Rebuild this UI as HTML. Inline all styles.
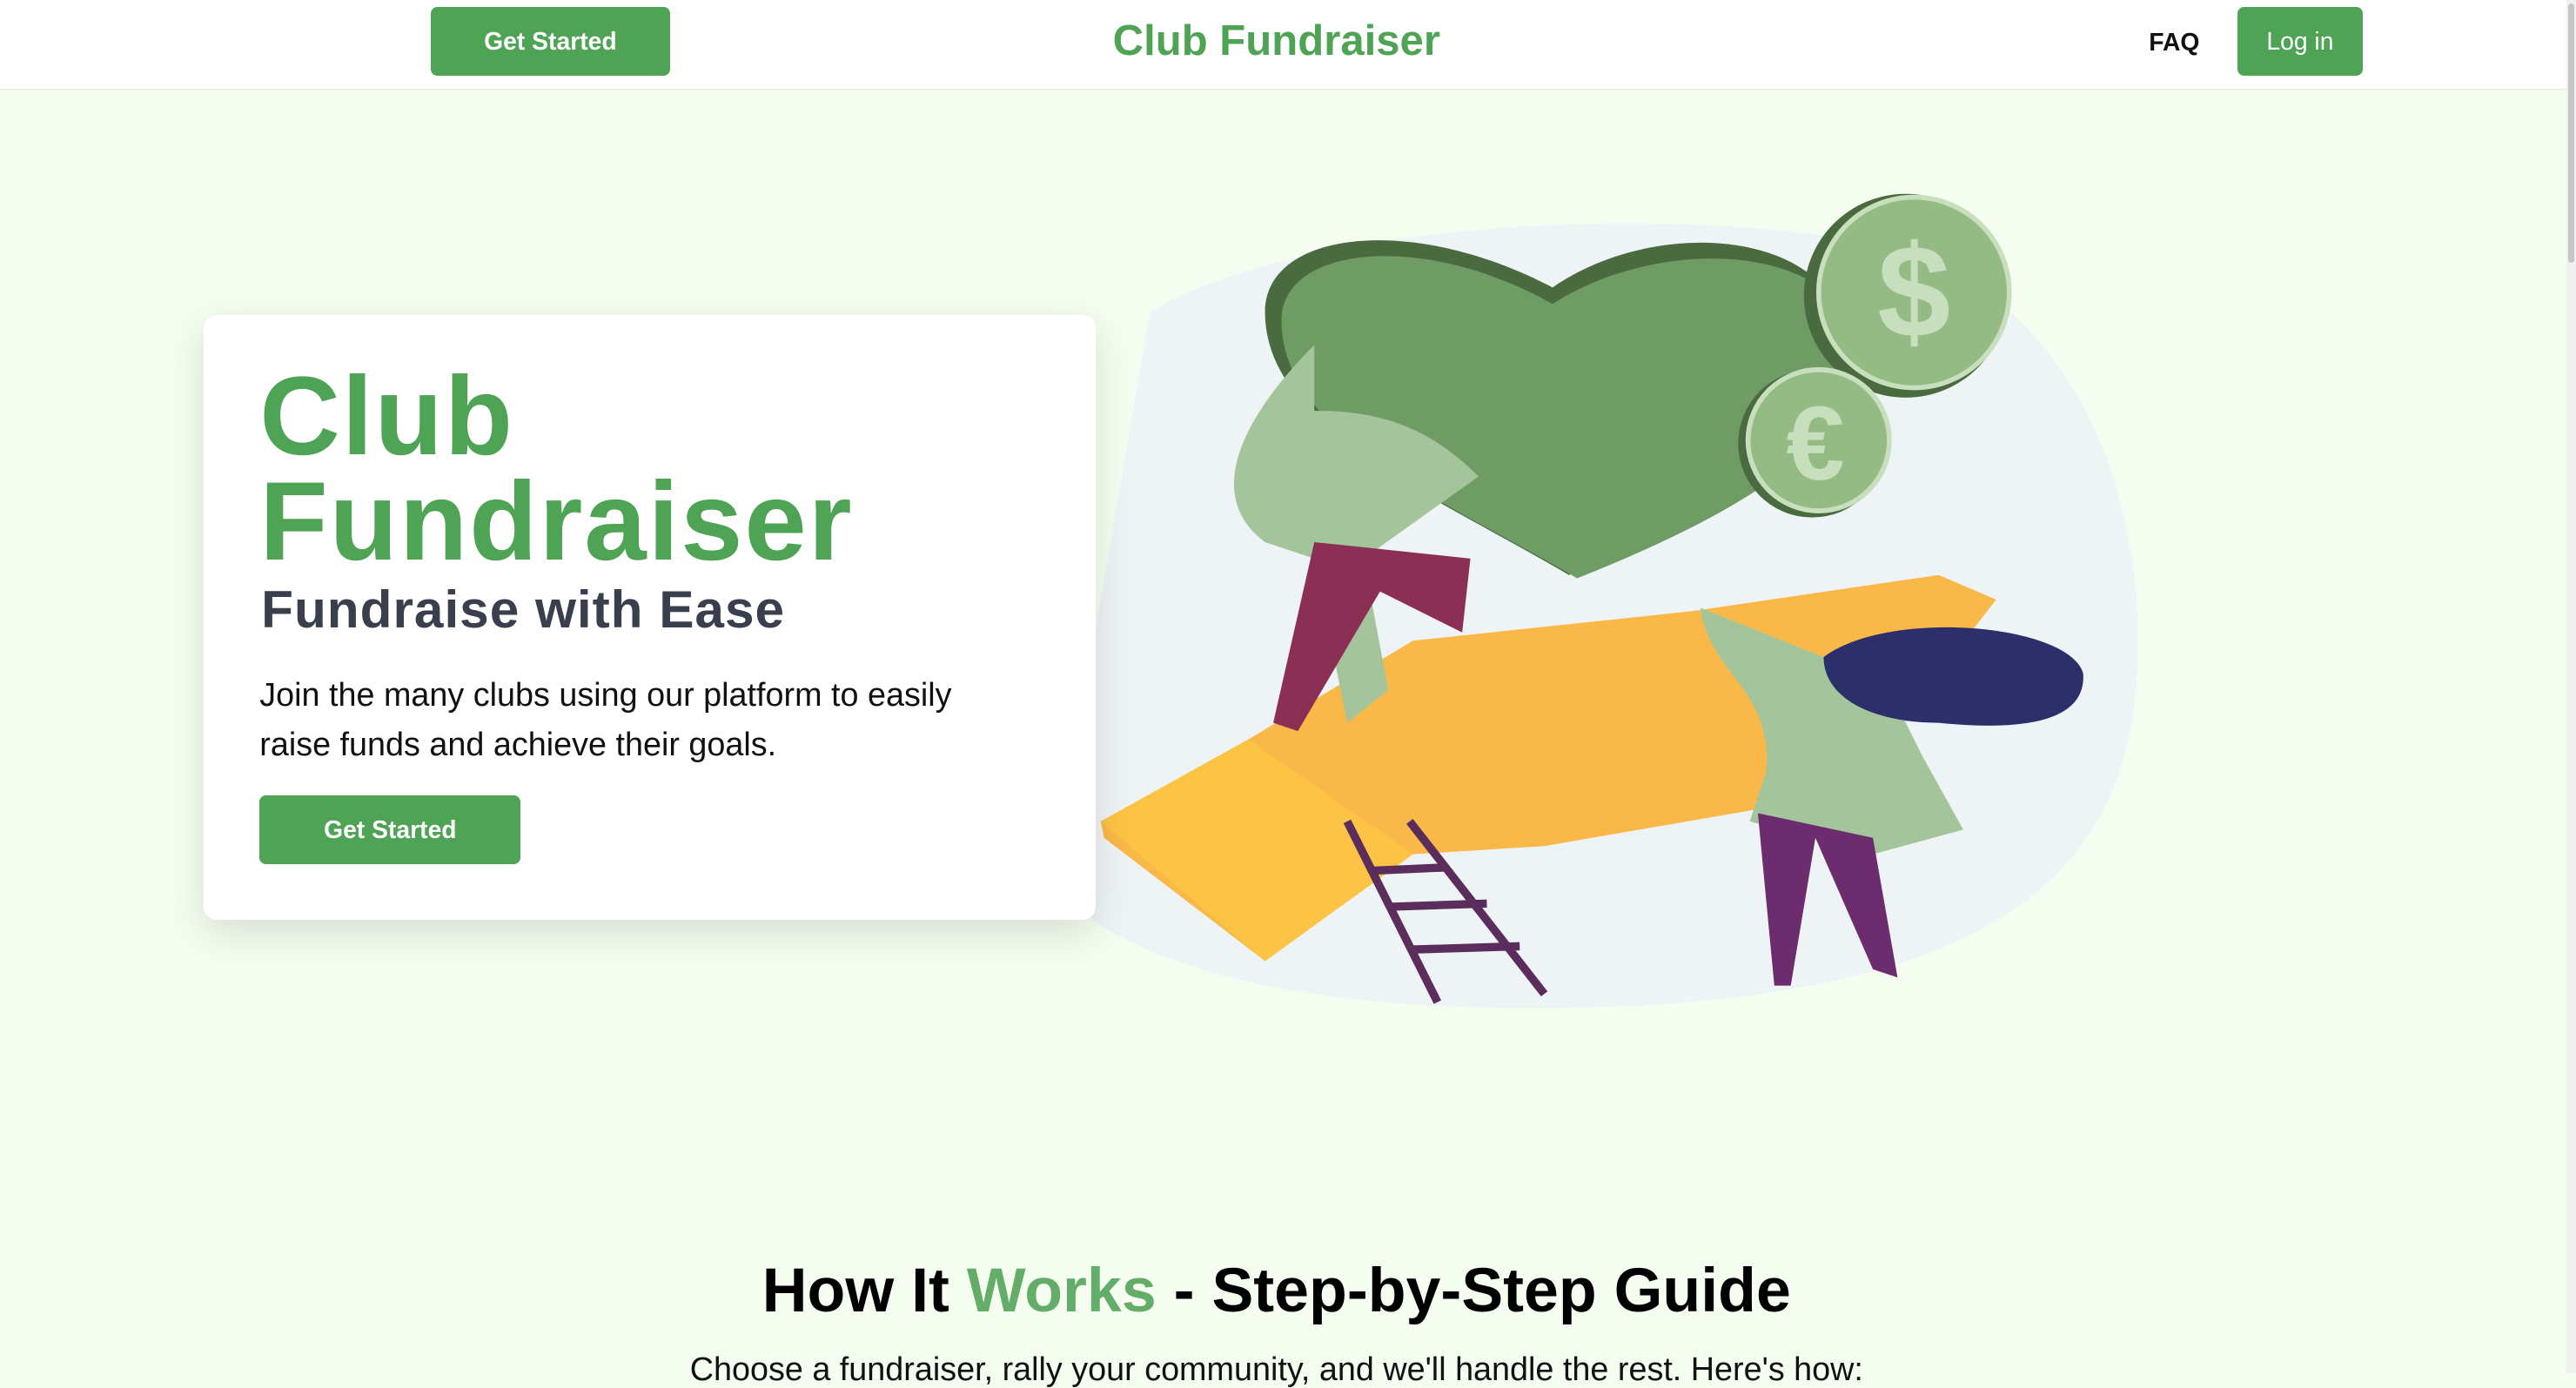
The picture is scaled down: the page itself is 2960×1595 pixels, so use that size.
<!DOCTYPE html>
<html><head><meta charset="utf-8"><style>
html,body{margin:0;padding:0;}
body{width:2960px;height:1579px;overflow:hidden;background:#f5fdf1;font-family:"Liberation Sans",sans-serif;}
#w{zoom:1.8878;width:1568px;height:836px;position:relative;}
.nav{position:absolute;left:0;top:0;width:1562px;height:54px;background:#fff;border-bottom:1px solid #e2e6e2;}
.btn{position:absolute;background:#4ea354;color:#fff;border-radius:4px;font-size:15px;font-weight:bold;display:flex;align-items:center;justify-content:center;}
.sb{position:absolute;left:1562px;top:0;width:6px;height:836px;background:#f0f0f0;}
.sb div{position:absolute;left:1px;top:2px;width:4px;height:158px;background:#c5c5c5;border-radius:2px;}
.card{position:absolute;left:124px;top:192px;width:543px;height:368px;background:#fff;border-radius:8px;box-shadow:0 8px 24px rgba(0,0,0,.12);}
</style></head><body><div id="w">
<div class="nav">
 <div class="btn" style="left:262px;top:4px;width:146px;height:42px;">Get Started</div>
 <div style="position:absolute;left:600px;width:354px;top:10px;text-align:center;font-size:26px;font-weight:bold;color:#4ea354;">Club Fundraiser</div>
 <div style="position:absolute;left:1308px;top:17px;font-size:15px;font-weight:bold;color:#111;">FAQ</div>
 <div class="btn" style="left:1362px;top:4px;width:76px;height:42px;font-weight:normal;">Log in</div>
</div>
<div class="sb"><div></div></div>
<svg style="position:absolute;left:0;top:0" width="1568" height="836">
 <path d="M700 190 C780 140 1000 120 1150 150 C1260 180 1310 300 1300 420 C1290 540 1200 600 1000 612 C830 620 700 600 640 540 Z" fill="#eef3f5"/>
 <path d="M955 350 C870 300 770 260 770 190 C770 140 860 130 945 175 C1010 130 1120 140 1125 210 C1130 270 1030 320 955 350Z" fill="#4a6b40"/>
 <path d="M960 352 C880 305 780 265 780 195 C780 150 865 140 945 185 C1015 140 1128 150 1130 215 C1132 275 1040 320 960 352Z" fill="#6f9b64"/>
 <circle cx="1160" cy="180" r="62" fill="#4a6b40"/><circle cx="1165" cy="178" r="58" fill="#95bb85" stroke="#c8dfbd" stroke-width="3"/>
 <text x="1165" y="205" text-anchor="middle" font-size="80" font-weight="bold" fill="#c8dfbd" font-family="Liberation Sans">$</text>
 <circle cx="1103" cy="270" r="45" fill="#4a6b40"/><circle cx="1107" cy="268" r="43" fill="#95bb85" stroke="#c8dfbd" stroke-width="3"/>
 <text x="1105" y="292" text-anchor="middle" font-size="64" font-weight="bold" fill="#c8dfbd" font-family="Liberation Sans">€</text>
 <path d="M670 500 L760 450 L860 390 L1030 372 L1180 350 L1215 365 L1180 410 L1080 430 L1085 490 L940 515 L860 520 L770 585 L672 510Z" fill="#f9b848"/>
 <path d="M670 500 L760 450 L860 520 L770 585Z" fill="#fcc344"/>
 <path d="M800 210 C760 250 730 300 770 330 L800 340 L820 440 L845 420 L830 340 L900 290 C870 260 840 250 800 250Z" fill="#a4c59b"/>
 <path d="M800 330 L775 440 L790 445 L840 360 L890 385 L895 340Z" fill="#8c2f55"/>
 <path d="M1035 370 C1040 410 1080 420 1075 470 L1065 500 L1140 520 L1195 505 L1170 460 L1150 420 L1110 400Z" fill="#a4c59b"/>
 <path d="M1110 400 C1150 370 1260 380 1268 410 C1270 440 1230 445 1180 440 C1140 440 1110 425 1110 400Z" fill="#2d2f6b"/>
 <path d="M1070 495 L1080 600 L1090 600 L1105 510 L1140 590 L1155 595 L1140 510Z" fill="#6c2c6e"/>
 <path d="M820 500 L875 610 M858 500 L940 605 M835 530 L880 528 M845 552 L905 550 M860 578 L925 576" stroke="#5a2d5c" stroke-width="5"/>
</svg>
<div class="card">
 <div style="position:absolute;left:34px;top:30px;font-size:68px;line-height:64px;font-weight:bold;color:#4ea354;letter-spacing:1px;">Club<br>Fundraiser</div>
 <div style="position:absolute;left:35px;top:160px;font-size:32px;font-weight:bold;color:#3a3f4e;letter-spacing:.5px;">Fundraise with Ease</div>
 <div style="position:absolute;left:34px;top:216px;font-size:20px;line-height:30px;color:#111;width:450px;">Join the many clubs using our platform to easily raise funds and achieve their goals.</div>
 <div class="btn" style="left:34px;top:292px;width:159px;height:42px;">Get Started</div>
</div>
<div style="position:absolute;left:0;width:1554px;top:764px;text-align:center;font-size:38px;font-weight:bold;color:#000;">How It <span style="color:#63ad68">Works</span> - Step-by-Step Guide</div>
<div style="position:absolute;left:0;width:1554px;top:822px;text-align:center;font-size:20px;color:#111;">Choose a fundraiser, rally your community, and we'll handle the rest. Here's how:</div>
</div></body></html>
